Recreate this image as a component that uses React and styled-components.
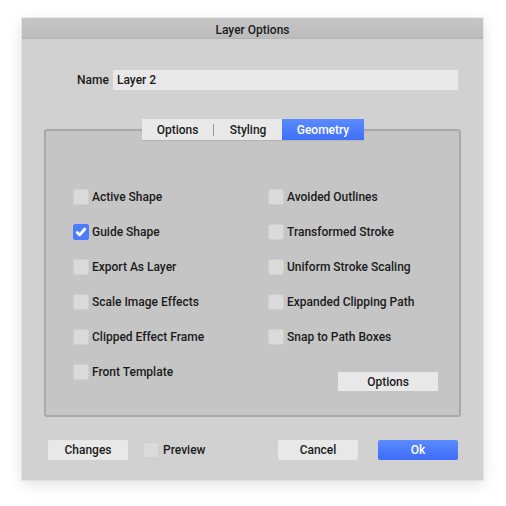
import styled, { createGlobalStyle } from "styled-components";

const Global = createGlobalStyle`
  html, body {
    margin: 0;
    background: #ffffff;
  }
  body {
    font-family: Roboto, "Liberation Sans", sans-serif;
    font-size: 12px;
    font-weight: 500;
    color: #1b1b1b;
  }
`;

const Page = styled.div`
  width: 506px;
  height: 506px;
  padding: 18px 0 0 22px;
  box-sizing: border-box;
`;

const Window = styled.div`
  width: 461px;
  height: 462px;
  background: #d1d1d1;
  box-shadow: 0 4px 14px rgba(0, 0, 0, 0.13), 0 0 0 1px rgba(0, 0, 0, 0.05);
  display: flex;
  flex-direction: column;
`;

const TitleBar = styled.div`
  height: 21px;
  padding-top: 3px;
  background: linear-gradient(#c6c6c6, #bcbcbc);
  border-bottom: 1px solid #b3b3b3;
  display: flex;
  align-items: center;
  justify-content: center;
  box-sizing: border-box;
`;

const NameRow = styled.div`
  display: flex;
  align-items: center;
  gap: 5px;
  margin: 31px 25px 0 55px;
`;

const Label = styled.span`
  width: 31px;
  text-align: right;
`;

const Field = styled.div`
  flex: 1;
  height: 20px;
  background: #e8e8e8;
  display: flex;
  align-items: center;
  padding-left: 4px;
`;

const Tabs = styled.div`
  display: flex;
  align-self: center;
  margin-top: 29px;
  margin-left: 1px;
  background: #e9e9e9;
  height: 21px;
  position: relative;
  z-index: 1;
  box-shadow: 0 1px 1px rgba(0, 0, 0, 0.08);
`;

const Tab = styled.div`
  display: flex;
  align-items: center;
  justify-content: center;
  width: ${(p) => p.$w}px;
  color: ${(p) => (p.$active ? "#ffffff" : "#1b1b1b")};
  background: ${(p) => (p.$active ? "linear-gradient(#5a8bff, #3f6ff7)" : "transparent")};
`;

const TabSep = styled.div`
  width: 1px;
  height: 12px;
  align-self: center;
  background: #9a9a9a;
`;

const Group = styled.div`
  margin: -11px 22px 0 22px;
  height: 288px;
  box-sizing: border-box;
  border: 2px solid #a9a9a9;
  border-radius: 3px;
  background: #c5c5c5;
  padding: 58px 21px 0 27px;
  display: grid;
  grid-template-columns: 195px 1fr;
  grid-auto-rows: 16px;
  row-gap: 19px;
`;

const CheckItem = styled.label`
  display: flex;
  align-items: center;
  gap: 3px;
`;

const Box = styled.span`
  width: 16px;
  height: 16px;
  box-sizing: border-box;
  border-radius: 2px;
  background: ${(p) => (p.$on ? "#4a7cfb" : "#dadada")};
  border: 1px solid ${(p) => (p.$on ? "#4a7cfb" : "#cfcfcf")};
  display: flex;
  align-items: center;
  justify-content: center;
`;

const SmallButton = styled.div`
  justify-self: end;
  margin-top: 8px;
  width: 100px;
  height: 19px;
  background: #e8e8e8;
  display: flex;
  align-items: center;
  justify-content: center;
`;

const Footer = styled.div`
  display: flex;
  align-items: center;
  margin: 23px 25px 0 26px;
`;

const Button = styled.div`
  width: 80px;
  height: 20px;
  display: flex;
  align-items: center;
  justify-content: center;
  background: ${(p) => (p.$primary ? "linear-gradient(#5a8bff, #3e6cf7)" : "#e8e8e8")};
  color: ${(p) => (p.$primary ? "#ffffff" : "#1b1b1b")};
  border-radius: 2px;
`;

const Spacer = styled.div`
  flex: 1;
`;

const Check = ({ on, label }) => (
  <CheckItem>
    <Box $on={on}>
      {on && (
        <svg width="12" height="12" viewBox="0 0 12 12">
          <path d="M2.2 6.4 L4.8 8.9 L9.8 3" fill="none" stroke="#fff" strokeWidth="2.8" strokeLinecap="round" strokeLinejoin="round" />
        </svg>
      )}
    </Box>
    {label}
  </CheckItem>
);

const left = ["Active Shape", "Guide Shape", "Export As Layer", "Scale Image Effects", "Clipped Effect Frame", "Front Template"];
const right = ["Avoided Outlines", "Transformed Stroke", "Uniform Stroke Scaling", "Expanded Clipping Path", "Snap to Path Boxes"];

export default function App() {
  const cells = [];
  for (let i = 0; i < 6; i++) {
    cells.push(<Check key={"l" + i} on={i === 1} label={left[i]} />);
    if (i < 5) cells.push(<Check key={"r" + i} label={right[i]} />);
    else cells.push(<SmallButton key="opt">Options</SmallButton>);
  }
  return (
    <Page>
      <Global />
      <Window>
        <TitleBar>Layer Options</TitleBar>
        <NameRow>
          <Label>Name</Label>
          <Field>Layer 2</Field>
        </NameRow>
        <Tabs>
          <Tab $w={71}>Options</Tab>
          <TabSep />
          <Tab $w={68}>Styling</Tab>
          <Tab $w={82} $active>Geometry</Tab>
        </Tabs>
        <Group>{cells}</Group>
        <Footer>
          <Button>Changes</Button>
          <CheckItem style={{ marginLeft: 15, gap: 4 }}>
            <Box />
            Preview
          </CheckItem>
          <Spacer />
          <Button>Cancel</Button>
          <Button $primary style={{ marginLeft: 20 }}>Ok</Button>
        </Footer>
      </Window>
    </Page>
  );
}
